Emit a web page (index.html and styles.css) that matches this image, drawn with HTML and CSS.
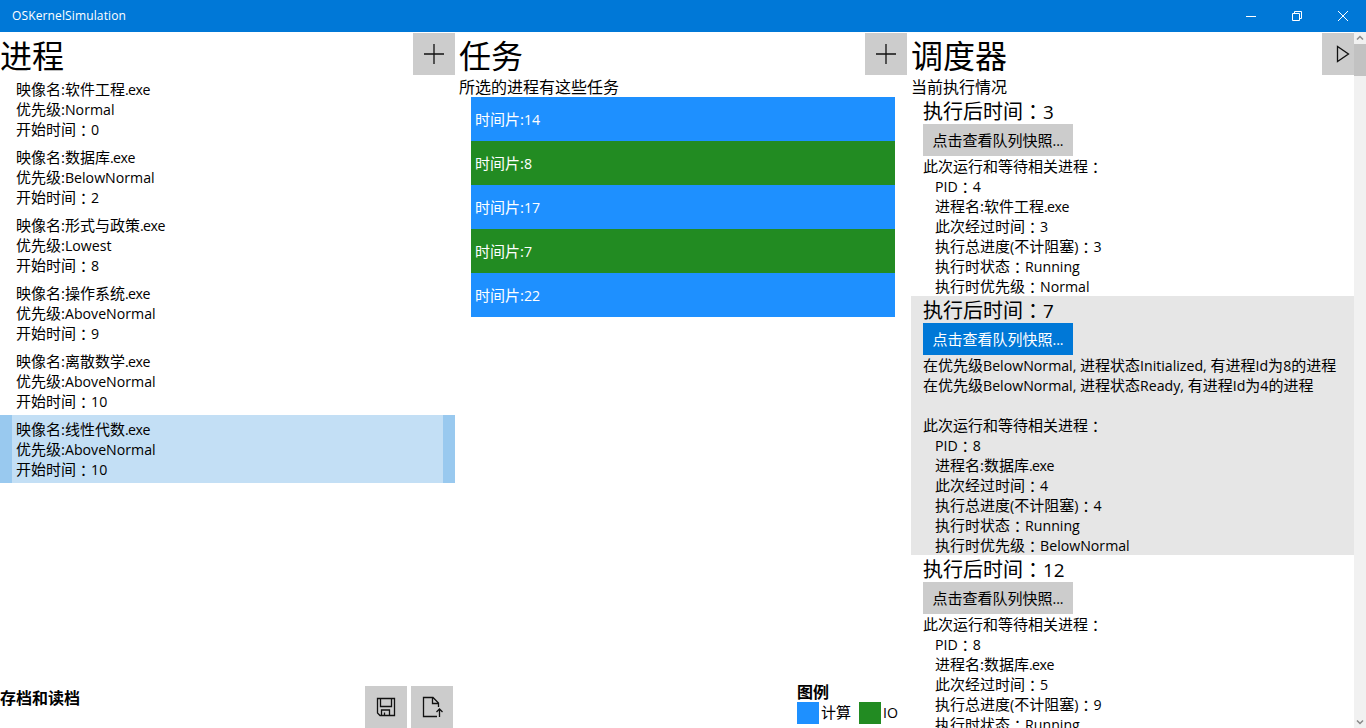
FILE: index.html
```html
<!DOCTYPE html>
<html lang="en">
<head>
<meta charset="utf-8">
<title>OSKernelSimulation</title>
<link rel="stylesheet" href="styles.css">
</head>
<body>
<header class="titlebar">
  <span class="app-name">OSKernelSimulation</span>
  <div class="window-controls">
    <svg viewBox="0 0 46 32"><path d="M18 16.5h10"/></svg>
    <svg viewBox="0 0 46 32"><path d="M18.5 13.5h7v7h-7zM20.5 13.5v-2h7v7h-2"/></svg>
    <svg viewBox="0 0 46 32"><path d="M18 11l10 10M28 11l-10 10"/></svg>
  </div>
</header>
<main class="columns">
  <section class="column processes">
    <div class="heading"><h1>进程</h1><button class="icon-button"><svg viewBox="0 0 42 42"><path d="M11 21h20M21 11v20"/></svg></button></div>
    <ul class="process-list">
      <li><p>映像名:软件工程<b class="ext">.exe</b></p><p>优先级:<b>Normal</b></p><p>开始时间<i>：</i><b>0</b></p></li>
      <li><p>映像名:数据库<b class="ext">.exe</b></p><p>优先级:<b>BelowNormal</b></p><p>开始时间<i>：</i><b>2</b></p></li>
      <li><p>映像名:形式与政策<b class="ext">.exe</b></p><p>优先级:<b>Lowest</b></p><p>开始时间<i>：</i><b>8</b></p></li>
      <li><p>映像名:操作系统<b class="ext">.exe</b></p><p>优先级:<b>AboveNormal</b></p><p>开始时间<i>：</i><b>9</b></p></li>
      <li><p>映像名:离散数学<b class="ext">.exe</b></p><p>优先级:<b>AboveNormal</b></p><p>开始时间<i>：</i><b>10</b></p></li>
      <li class="selected"><p>映像名:线性代数<b class="ext">.exe</b></p><p>优先级:<b>AboveNormal</b></p><p>开始时间<i>：</i><b>10</b></p></li>
    </ul>
    <footer class="archive">
      <strong>存档和读档</strong>
      <div class="archive-buttons">
        <button class="icon-button"><svg viewBox="0 0 42 42"><path d="M12.5 12.5h17v17h-14.500l-2.500-2.500zM15.500 12.500v8h11v-8M16.500 29v-5h8v5M19.500 29v-2.500"/></svg></button>
        <button class="icon-button"><svg viewBox="0 0 42 42"><path d="M26 30.500H12.500v-19h9.500l5.500 5.500v4M21.500 11.500v6h6M28.500 31v-8M25.500 26l3-3 3 3"/></svg></button>
      </div>
    </footer>
  </section>
  <section class="column tasks">
    <div class="heading"><h1>任务</h1><button class="icon-button"><svg viewBox="0 0 42 42"><path d="M11 21h20M21 11v20"/></svg></button></div>
    <h2>所选的进程有这些任务</h2>
    <ul class="task-list">
      <li>时间片:<b>14</b></li>
      <li class="io">时间片:<b>8</b></li>
      <li>时间片:<b>17</b></li>
      <li class="io">时间片:<b>7</b></li>
      <li>时间片:<b>22</b></li>
    </ul>
    <footer class="legend">
      <strong>图例</strong>
      <div class="legend-row"><span class="swatch"></span><span class="legend-label">计算</span><span class="swatch io"></span><span class="legend-label"><b>IO</b></span></div>
    </footer>
  </section>
  <section class="column scheduler">
    <div class="scheduler-content">
      <div class="heading"><h1>调度器</h1><button class="icon-button run"><svg viewBox="0 0 42 42"><path d="M15.500 13.500v15L26.500 21z"/></svg></button></div>
      <h2>当前执行情况</h2>
      <article class="step">
        <h3>执行后时间<i>：</i><b>3</b></h3>
        <button class="snapshot">点击查看队列快照<b>...</b></button>
        <p>此次运行和等待相关进程<i>：</i></p>
        <div class="details"><p><b>PID</b><i>：</i><b>4</b></p><p>进程名:软件工程<b class="ext">.exe</b></p><p>此次经过时间<i>：</i><b>3</b></p><p>执行总进度<b>(</b>不计阻塞<b>)</b><i>：</i><b>3</b></p><p>执行时状态<i>：</i><b>Running</b></p><p>执行时优先级<i>：</i><b>Normal</b></p></div>
      </article>
      <article class="step current">
        <h3>执行后时间<i>：</i><b>7</b></h3>
        <button class="snapshot">点击查看队列快照<b>...</b></button>
        <p>在优先级<b>BelowNormal, </b>进程状态<b>Initialized, </b>有进程<b>Id</b>为<b>8</b>的进程</p>
        <p>在优先级<b>BelowNormal, </b>进程状态<b>Ready, </b>有进程<b>Id</b>为<b>4</b>的进程</p>
        <p></p>
        <p>此次运行和等待相关进程<i>：</i></p>
        <div class="details"><p><b>PID</b><i>：</i><b>8</b></p><p>进程名:数据库<b class="ext">.exe</b></p><p>此次经过时间<i>：</i><b>4</b></p><p>执行总进度<b>(</b>不计阻塞<b>)</b><i>：</i><b>4</b></p><p>执行时状态<i>：</i><b>Running</b></p><p>执行时优先级<i>：</i><b>BelowNormal</b></p></div>
      </article>
      <article class="step">
        <h3>执行后时间<i>：</i><b>12</b></h3>
        <button class="snapshot">点击查看队列快照<b>...</b></button>
        <p>此次运行和等待相关进程<i>：</i></p>
        <div class="details"><p><b>PID</b><i>：</i><b>8</b></p><p>进程名:数据库<b class="ext">.exe</b></p><p>此次经过时间<i>：</i><b>5</b></p><p>执行总进度<b>(</b>不计阻塞<b>)</b><i>：</i><b>9</b></p><p>执行时状态<i>：</i><b>Running</b></p></div>
      </article>
    </div>
    <div class="scrollbar">
      <svg viewBox="0 0 12 12"><path d="M3 7.500l3-3 3 3"/></svg>
      <div class="thumb"></div>
      <svg class="down" viewBox="0 0 12 12"><path d="M3 4.500l3 3 3-3"/></svg>
    </div>
  </section>
</main>
</body>
</html>
```
FILE: styles.css
```css
* { box-sizing: border-box; margin: 0; padding: 0; }
body {
  height: 728px;
  overflow: hidden;
  display: flex;
  flex-direction: column;
  background: #fff;
  color: #000;
  font: 15px/20px "Open Sans", "Noto Sans CJK SC", sans-serif;
}
ul { list-style: none; }
p { height: 20px; white-space: nowrap; }
/* Latin runs are set slightly smaller than the Chinese text */
b { font-weight: inherit; font-size: .945em; line-height: 1; white-space: pre; }
.ext { letter-spacing: -.55px; }
/* Full-width colon, centred in its cell */
i { font-style: normal; font-family: "Noto Sans CJK TC", sans-serif; line-height: 1; position: relative; top: 1px; }
svg { display: block; fill: none; stroke: currentColor; }
button { border: 0; font: inherit; color: inherit; background: #ccc; }

.titlebar {
  flex: none;
  height: 32px;
  display: flex;
  align-items: center;
  justify-content: space-between;
  padding-left: 12px;
  background: #0078d7;
  color: #fff;
}
.app-name { font-size: 12px; line-height: 16px; letter-spacing: .13px; }
.window-controls { display: flex; }
.window-controls svg { width: 46px; height: 32px; }

.columns { flex: 1; min-height: 0; display: grid; grid-template-columns: 455px 456px 455px; }
.column { min-width: 0; min-height: 0; display: flex; flex-direction: column; overflow: hidden; }
.heading { flex: none; height: 43px; display: flex; justify-content: space-between; align-items: flex-end; }
h1 { font-size: 32px; line-height: 39px; font-weight: 400; }
h2 { font-size: 16px; line-height: 24px; height: 22px; font-weight: 400; }
.icon-button { width: 42px; height: 42px; flex: none; overflow: hidden; color: #111; }
.icon-button svg { width: 42px; height: 42px; stroke-width: 1.3; }

.process-list li { height: 68px; padding: 4px; border: solid transparent; border-width: 0 12px; }
.process-list .selected { background: #c3dff5; border-color: #99c9ef; }
.archive { margin-top: auto; display: flex; justify-content: space-between; padding-right: 2px; }
.archive strong, .legend strong { font-size: 16px; font-weight: 700; }
.archive strong { line-height: 24px; }
.archive-buttons { display: flex; gap: 4px; }

.tasks { padding: 0 4px; }
.task-list { padding: 0 12px; }
.task-list li { height: 44px; padding-left: 4px; line-height: 44px; background: #1e90ff; color: #fff; }
.task-list .io, .swatch.io { background: #228b22; }
.legend { margin-top: auto; align-self: flex-end; padding: 0 9px 4px 0; }
.legend strong { display: block; line-height: 20px; }
.legend-row { display: flex; align-items: flex-start; }
.swatch { width: 22px; height: 22px; background: #1e90ff; }
.legend-label { margin-left: 2px; }
.legend-label + .swatch { margin-left: 8px; }

.scheduler { flex-direction: row; }
.scheduler-content { flex: 1; min-width: 0; overflow: hidden; }
.icon-button.run { width: 32px; }
.step { padding-left: 12px; }
.step.current { background: #e6e6e6; }
.step h3 { font-size: 20px; line-height: 30px; height: 27px; font-weight: 400; }
.snapshot { display: block; width: 150px; height: 32px; line-height: 32px; }
.current .snapshot { background: #0078d7; color: #fff; }
.details { padding-left: 12px; }
.scrollbar { width: 12px; flex: none; display: flex; flex-direction: column; background: #f1f1f1; color: #888; }
.scrollbar svg { width: 12px; height: 12px; stroke-width: 1.5; }
.thumb { height: 32px; background: #c2c2c2; }
.scrollbar .down { margin-top: auto; }
```
